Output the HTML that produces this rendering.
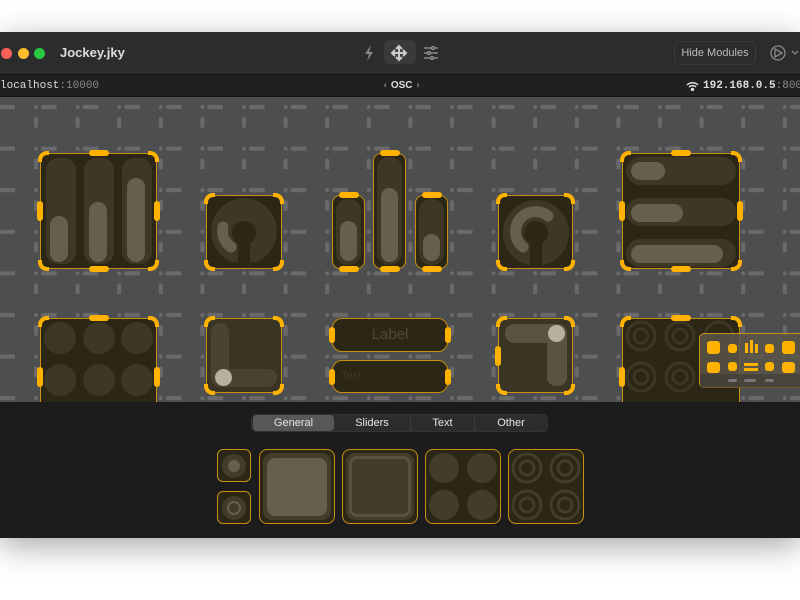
<!DOCTYPE html>
<html><head><meta charset="utf-8"><style>
*{margin:0;padding:0;box-sizing:border-box}
body{width:800px;height:600px;background:#fff;position:relative;overflow:hidden;font-family:"Liberation Sans",sans-serif}
.win{position:absolute;left:0;top:32px;width:800px;height:506px;background:#1c1c1c;box-shadow:0 8px 30px rgba(0,0,0,.35);overflow:hidden}
.title{position:absolute;left:0;top:0;width:800px;height:43px;background:#2b2c2d;border-bottom:1px solid #151515}
.status{position:absolute;left:0;top:43px;width:800px;height:22px;background:#1f2021;border-bottom:1px solid #111;font-family:"Liberation Mono",monospace;font-size:11px;color:#ddd;white-space:nowrap}
.canvas{position:absolute;left:0;top:65px;width:800px;height:305px;background:#4d4e4f;overflow:hidden}
.m{position:absolute;background:#2c2617;border:1px solid #c8900f;border-radius:8px}
.c{position:absolute;width:11px;height:11px;border:4px solid #ffb300}
.tl{left:-3px;top:-3px;border-right:none;border-bottom:none;border-top-left-radius:9px}
.tr{right:-3px;top:-3px;border-left:none;border-bottom:none;border-top-right-radius:9px}
.bl{left:-3px;bottom:-3px;border-right:none;border-top:none;border-bottom-left-radius:9px}
.br{right:-3px;bottom:-3px;border-left:none;border-top:none;border-bottom-right-radius:9px}
.hb{position:absolute;width:20px;height:6px;background:#ffb300;border-radius:3px;left:50%;margin-left:-10px}
.vb{position:absolute;width:6px;height:20px;background:#ffb300;border-radius:3px;top:50%;margin-top:-10px}
.tr2{position:absolute;background:#3e3726;border-radius:12px}
.fi{position:absolute;background:#675e4c;border-radius:10px}
.seg{position:absolute;left:251px;top:382px;width:297px;height:18px;background:#2c2c2c;border-radius:5px;border:1px solid #333;font-size:11px;color:#e6e6e6}
.seg div{position:absolute;top:0;height:16px;line-height:16px;text-align:center}
.p{position:absolute;background:#2c2617;border:1px solid #c8900f;border-radius:6px}
.dot{position:absolute;border-radius:50%;background:#3e3726}
</style></head><body>
<div class="win">
 <div class="title">
  <div style="position:absolute;left:1px;top:16px;width:11px;height:11px;border-radius:50%;background:#fe5f57"></div>
  <div style="position:absolute;left:18px;top:16px;width:11px;height:11px;border-radius:50%;background:#febc2e"></div>
  <div style="position:absolute;left:34px;top:16px;width:11px;height:11px;border-radius:50%;background:#28c840"></div>
  <div style="position:absolute;left:60px;top:13px;font-size:13px;font-weight:bold;color:#ddd">Jockey.jky</div>
  <svg style="position:absolute;left:362px;top:12px" width="14" height="18" viewBox="0 0 14 18"><path d="M9 1 L3 10 H7 L5 17 L11 8 H7 Z" fill="#888"/></svg>
  <div style="position:absolute;left:384px;top:8px;width:32px;height:24px;background:#3a3a3b;border-radius:6px"></div>
  <svg style="position:absolute;left:390px;top:12px" width="18" height="18" viewBox="0 0 18 18" stroke="#ccc" stroke-width="2" fill="none"><path d="M9 2V16M2 9H16M6 5L9 2L12 5M6 13L9 16L12 13M5 6L2 9L5 12M13 6L16 9L13 12"/></svg>
  <svg style="position:absolute;left:423px;top:13px" width="16" height="16" viewBox="0 0 16 16" stroke="#999" stroke-width="1.3" fill="none"><path d="M1 3H15M1 8H15M1 13H15"/><circle cx="10" cy="3" r="1.5" fill="#2b2c2d"/><circle cx="6" cy="8" r="1.5" fill="#2b2c2d"/><circle cx="9" cy="13" r="1.5" fill="#2b2c2d"/></svg>
  <div style="position:absolute;left:674px;top:9px;width:82px;height:24px;border:1px solid #3a3a3a;border-radius:6px;font-size:11px;color:#bbb;text-align:center;line-height:22px">Hide Modules</div>
  <svg style="position:absolute;left:770px;top:13px" width="30" height="16" viewBox="0 0 30 16" stroke="#888" stroke-width="1.3" fill="none"><circle cx="8" cy="8" r="7"/><path d="M5 4L12 8L5 12Z"/><path d="M22 6L25 9L28 6"/></svg>
 </div>
 <div class="status">
  <div style="position:absolute;left:0;top:5px">localhost<span style="color:#888">:10000</span></div>
  <div style="position:absolute;left:382px;top:5px;font-family:'Liberation Sans',sans-serif;font-weight:bold;font-size:10px"><span style="color:#666">◖</span> OSC <span style="color:#666">◗</span></div>
  <svg style="position:absolute;left:686px;top:6px" width="13" height="10" viewBox="0 0 13 10" fill="none" stroke="#ddd" stroke-width="1.5"><path d="M1 4A8 8 0 0 1 12 4M3 6A5 5 0 0 1 10 6"/><circle cx="6.5" cy="8.5" r="1" fill="#ddd"/></svg>
  <div style="position:absolute;left:703px;top:5px;font-weight:bold">192.168.0.5<span style="color:#888;font-weight:normal">:8000</span></div>
 </div>
 <div class="canvas">
  <svg width="800" height="305" style="position:absolute;left:0;top:0">
   <defs><pattern id="g" x="15" y="-11" width="41.6" height="41.6" patternUnits="userSpaceOnUse">
    <circle cx="21" cy="21" r="2" fill="#6a6a6a"/>
    <rect x="26" y="19" width="20" height="4" rx="2" fill="#6a6a6a"/>
    <rect x="19" y="31" width="4" height="20" rx="2" fill="#6a6a6a"/>
   </pattern></defs>
   <rect width="800" height="305" fill="url(#g)"/>
  </svg>
  <div class="m" style="left:40px;top:56px;width:117px;height:116px">
   <div class="tr2" style="left:5px;top:4px;width:30px;height:106px"></div><div class="fi" style="left:9px;top:62px;width:18px;height:46px"></div>
   <div class="tr2" style="left:43px;top:4px;width:30px;height:106px"></div><div class="fi" style="left:48px;top:48px;width:18px;height:60px"></div>
   <div class="tr2" style="left:81px;top:4px;width:30px;height:106px"></div><div class="fi" style="left:86px;top:24px;width:18px;height:84px"></div>
   <div class="c tl"></div><div class="c tr"></div><div class="c bl"></div><div class="c br"></div>
   <div class="hb" style="top:-4px"></div><div class="hb" style="bottom:-4px"></div><div class="vb" style="left:-4px"></div><div class="vb" style="right:-4px"></div>
  </div>
  <div class="m" style="left:206px;top:98px;width:76px;height:74px">
   <svg width="74" height="72" style="position:absolute;left:0;top:0"><path d="M25 66 A33 33 0 1 1 49 66" fill="#3e3726"/><path d="M25 66 L30 48 A13 13 0 1 1 44 48 L49 66Z" fill="#3e3726"/><circle cx="37" cy="37" r="12" fill="#2c2617"/><rect x="31" y="45" width="12" height="30" fill="#2c2617"/><path d="M24 51 A19 19 0 0 1 16 31" stroke="#675e4c" stroke-width="11" stroke-linecap="round" fill="none"/></svg>
   <div class="c tl"></div><div class="c tr"></div><div class="c bl"></div><div class="c br"></div>
  </div>
  <div class="m" style="left:332px;top:98px;width:33px;height:74px"><div class="tr2" style="left:3px;top:3px;width:25px;height:66px"></div><div class="fi" style="left:7px;top:25px;width:17px;height:40px"></div><div class="hb" style="top:-4px"></div><div class="hb" style="bottom:-4px"></div></div>
  <div class="m" style="left:373px;top:56px;width:33px;height:116px"><div class="tr2" style="left:3px;top:3px;width:25px;height:108px"></div><div class="fi" style="left:7px;top:34px;width:17px;height:74px"></div><div class="hb" style="top:-4px"></div><div class="hb" style="bottom:-4px"></div></div>
  <div class="m" style="left:415px;top:98px;width:33px;height:74px"><div class="tr2" style="left:3px;top:3px;width:25px;height:66px"></div><div class="fi" style="left:7px;top:38px;width:17px;height:27px"></div><div class="hb" style="top:-4px"></div><div class="hb" style="bottom:-4px"></div></div>
  <div class="m" style="left:498px;top:98px;width:75px;height:74px">
   <svg width="73" height="72" style="position:absolute;left:0;top:0"><circle cx="37" cy="37" r="33" fill="#3e3726"/><circle cx="37" cy="37" r="12" fill="#2c2617"/><rect x="31" y="45" width="12" height="30" fill="#2c2617"/><path d="M24 51 A19 19 0 0 1 49 20" stroke="#675e4c" stroke-width="11" stroke-linecap="round" fill="none"/></svg>
   <div class="c tl"></div><div class="c tr"></div><div class="c bl"></div><div class="c br"></div>
  </div>
  <div class="m" style="left:622px;top:56px;width:118px;height:116px">
   <div class="tr2" style="left:3px;top:3px;width:110px;height:28px;border-radius:14px"></div><div class="fi" style="left:8px;top:8px;width:34px;height:18px"></div>
   <div class="tr2" style="left:3px;top:44px;width:110px;height:28px;border-radius:14px"></div><div class="fi" style="left:8px;top:50px;width:52px;height:18px"></div>
   <div class="tr2" style="left:3px;top:85px;width:110px;height:28px;border-radius:14px"></div><div class="fi" style="left:8px;top:91px;width:92px;height:18px"></div>
   <div class="c tl"></div><div class="c tr"></div><div class="c bl"></div><div class="c br"></div>
   <div class="hb" style="top:-4px"></div><div class="hb" style="bottom:-4px"></div><div class="vb" style="left:-4px"></div><div class="vb" style="right:-4px"></div>
  </div>
  <div class="m" style="left:40px;top:221px;width:117px;height:100px">
   <div class="dot" style="left:3px;top:3px;width:32px;height:32px"></div><div class="dot" style="left:42px;top:3px;width:32px;height:32px"></div><div class="dot" style="left:80px;top:3px;width:32px;height:32px"></div>
   <div class="dot" style="left:3px;top:45px;width:32px;height:32px"></div><div class="dot" style="left:42px;top:45px;width:32px;height:32px"></div><div class="dot" style="left:80px;top:45px;width:32px;height:32px"></div>
   <div class="c tl"></div><div class="c tr"></div><div class="hb" style="top:-4px"></div><div class="vb" style="left:-4px;top:58px"></div><div class="vb" style="right:-4px;top:58px"></div>
  </div>
  <div class="m" style="left:206px;top:221px;width:76px;height:75px;background:#3a3424">
   <div style="position:absolute;left:4px;top:50px;width:66px;height:18px;background:#4a4333;border-radius:9px"></div>
   <div style="position:absolute;left:4px;top:4px;width:18px;height:64px;background:#4a4333;border-radius:9px"></div>
   <div style="position:absolute;left:8px;top:50px;width:17px;height:17px;background:#b8b09e;border-radius:50%"></div>
   <div class="c tl"></div><div class="c tr"></div><div class="c bl"></div><div class="c br"></div>
  </div>
  <div class="m" style="left:332px;top:221px;width:116px;height:34px;border-radius:10px;text-align:center;font-size:15px;color:#4f4838;line-height:32px">Label<div class="vb" style="left:-4px;margin-top:-8px;height:16px"></div><div class="vb" style="right:-4px;margin-top:-8px;height:16px"></div></div>
  <div class="m" style="left:332px;top:263px;width:116px;height:33px;border-radius:10px;font-size:11px;color:#3e3828;line-height:31px;padding-left:8px">Text<div class="vb" style="left:-4px;margin-top:-8px;height:16px"></div><div class="vb" style="right:-4px;margin-top:-8px;height:16px"></div></div>
  <div class="m" style="left:498px;top:221px;width:75px;height:75px;background:#3a3424">
   <div style="position:absolute;left:6px;top:5px;width:62px;height:19px;background:#5a5342;border-radius:9px"></div>
   <div style="position:absolute;left:48px;top:5px;width:20px;height:62px;background:#5a5342;border-radius:9px"></div>
   <div style="position:absolute;left:49px;top:6px;width:17px;height:17px;background:#b8b09e;border-radius:50%"></div>
   <div class="c tl"></div><div class="c tr"></div><div class="c bl"></div><div class="c br"></div><div class="vb" style="left:-4px"></div>
  </div>
  <div class="m" style="left:622px;top:221px;width:118px;height:100px">
   <svg width="116" height="90" style="position:absolute;left:0;top:0" fill="none" stroke="#3e3726" stroke-width="3"><circle cx="18" cy="17" r="14"/><circle cx="18" cy="17" r="7"/><circle cx="57" cy="17" r="14"/><circle cx="57" cy="17" r="7"/><circle cx="96" cy="17" r="14"/><circle cx="18" cy="58" r="14"/><circle cx="18" cy="58" r="7"/><circle cx="57" cy="58" r="14"/><circle cx="57" cy="58" r="7"/></svg>
   <div class="c tl"></div><div class="c tr"></div><div class="hb" style="top:-4px"></div><div class="vb" style="left:-4px;top:58px"></div>
  </div>
  <div style="position:absolute;left:699px;top:236px;width:110px;height:55px;background:rgba(90,85,70,.85);border:1px solid #c8900f;border-radius:5px">
   <div style="position:absolute;left:7px;top:7px;width:13px;height:13px;background:#ffb300;border-radius:3px"></div>
   <div style="position:absolute;left:28px;top:10px;width:9px;height:9px;background:#ffb300;border-radius:3px"></div>
   <div style="position:absolute;left:45px;top:9px;width:3px;height:10px;background:#ffb300"></div><div style="position:absolute;left:50px;top:6px;width:3px;height:13px;background:#ffb300"></div><div style="position:absolute;left:55px;top:10px;width:3px;height:9px;background:#ffb300"></div>
   <div style="position:absolute;left:65px;top:10px;width:9px;height:9px;background:#ffb300;border-radius:3px"></div>
   <div style="position:absolute;left:82px;top:7px;width:13px;height:13px;background:#ffb300;border-radius:3px"></div>
   <div style="position:absolute;left:7px;top:28px;width:13px;height:11px;background:#ffb300;border-radius:3px"></div>
   <div style="position:absolute;left:28px;top:28px;width:9px;height:9px;background:#ffb300;border-radius:3px"></div>
   <div style="position:absolute;left:44px;top:29px;width:14px;height:3px;background:#ffb300"></div><div style="position:absolute;left:44px;top:34px;width:14px;height:3px;background:#ffb300"></div>
   <div style="position:absolute;left:65px;top:28px;width:9px;height:9px;background:#ffb300;border-radius:3px"></div>
   <div style="position:absolute;left:82px;top:28px;width:13px;height:11px;background:#ffb300;border-radius:3px"></div>
   <div style="position:absolute;left:0;top:40px;width:110px;height:14px;background:rgba(60,58,52,.6)"></div>
   <div style="position:absolute;left:28px;top:45px;width:9px;height:3px;background:#777;border-radius:2px"></div><div style="position:absolute;left:44px;top:45px;width:12px;height:3px;background:#777;border-radius:2px"></div><div style="position:absolute;left:65px;top:45px;width:9px;height:3px;background:#777;border-radius:2px"></div>
  </div>
 </div>
 <div class="seg">
  <div style="left:1px;width:81px;background:#575757;border-radius:4px">General</div>
  <div style="left:82px;width:76px">Sliders</div>
  <div style="left:158px;width:64px;border-left:1px solid #3a3a3a">Text</div>
  <div style="left:222px;width:73px;border-left:1px solid #3a3a3a">Other</div>
 </div>
 <div class="p" style="left:217px;top:417px;width:34px;height:33px"><div class="dot" style="left:4px;top:4px;width:24px;height:24px;background:#433c2b"></div><div class="dot" style="left:10px;top:10px;width:12px;height:12px;background:#675e4c"></div></div>
 <div class="p" style="left:217px;top:459px;width:34px;height:33px"><div class="dot" style="left:4px;top:4px;width:24px;height:24px;background:#433c2b"></div><div class="dot" style="left:9px;top:9px;width:14px;height:14px;border:2px solid #675e4c;background:none"></div></div>
 <div class="p" style="left:259px;top:417px;width:76px;height:75px;border-radius:8px"><div style="position:absolute;left:3px;top:3px;width:68px;height:67px;background:#433c2b;border-radius:9px"></div><div style="position:absolute;left:7px;top:8px;width:60px;height:58px;background:#675e4c;border-radius:8px"></div></div>
 <div class="p" style="left:342px;top:417px;width:76px;height:75px;border-radius:8px"><div style="position:absolute;left:3px;top:3px;width:68px;height:67px;background:#433c2b;border-radius:9px"></div><div style="position:absolute;left:6px;top:6px;width:62px;height:61px;border:3px solid #5a5240;border-radius:8px"></div></div>
 <div class="p" style="left:425px;top:417px;width:76px;height:75px;border-radius:8px"><div class="dot" style="left:3px;top:3px;width:30px;height:30px;background:#433c2b"></div><div class="dot" style="left:41px;top:3px;width:30px;height:30px;background:#433c2b"></div><div class="dot" style="left:3px;top:40px;width:30px;height:30px;background:#433c2b"></div><div class="dot" style="left:41px;top:40px;width:30px;height:30px;background:#433c2b"></div></div>
 <div class="p" style="left:508px;top:417px;width:76px;height:75px;border-radius:8px"><svg width="74" height="73" style="position:absolute;left:0;top:0" fill="none" stroke="#433c2b" stroke-width="3"><circle cx="18" cy="18" r="14"/><circle cx="18" cy="18" r="7"/><circle cx="56" cy="18" r="14"/><circle cx="56" cy="18" r="7"/><circle cx="18" cy="55" r="14"/><circle cx="18" cy="55" r="7"/><circle cx="56" cy="55" r="14"/><circle cx="56" cy="55" r="7"/></svg></div>
</div>
</body></html>
